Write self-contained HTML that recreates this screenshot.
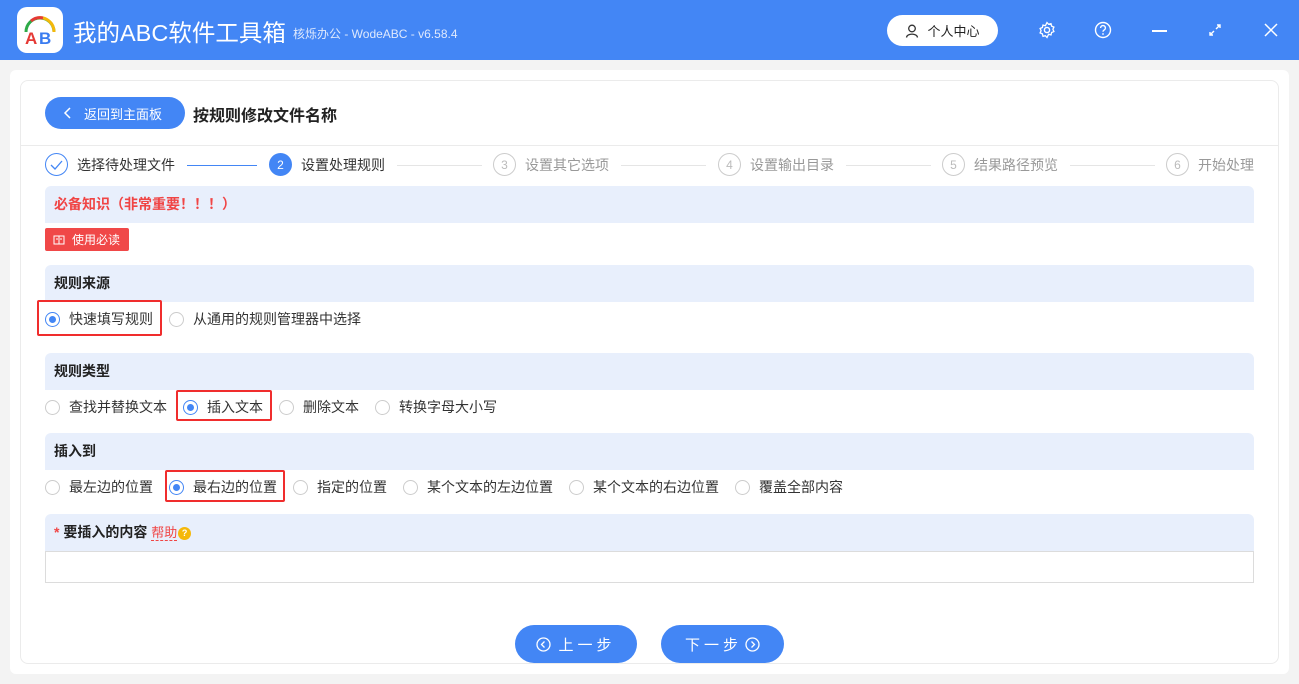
<!DOCTYPE html>
<html><head><meta charset="utf-8"><style>
*{box-sizing:border-box;margin:0;padding:0}
body{width:1299px;height:684px;background:#f3f3f3;font-family:"Liberation Sans","Noto Sans CJK SC",sans-serif;position:relative;overflow:hidden;color:#333}
.a{position:absolute}
.hdr{left:0;top:0;width:1299px;height:60px;background:#4386f5}
.bar{left:45px;width:1209px;height:37px;background:#e8effc;font-size:14px;font-weight:bold;color:#222;padding-left:9px;line-height:37px;border-radius:6px 6px 0 0}
.r{font-size:14px;color:#333;display:flex;align-items:center;line-height:16px}
.rd{width:15px;height:15px;border:1px solid #ccc;border-radius:50%;background:#fff;margin-right:9px;display:inline-block;position:relative;flex:none}
.rd.on{border-color:#4386f5}
.rd.on::after{content:"";position:absolute;left:3px;top:3px;width:7px;height:7px;border-radius:50%;background:#4386f5}
.box{border:2px solid #f02d2d;border-radius:2px}
.step{font-size:14px;color:#333;display:flex;align-items:center}
.sc{width:23px;height:23px;border-radius:50%;border:1px solid #ccc;color:#bbb;font-size:12px;display:inline-flex;align-items:center;justify-content:center;margin-right:9px}
.ln{height:1px;background:#e5e5e5}
.btn{height:38px;border-radius:19px;background:#4386f5;color:#fff;font-size:15px;display:flex;align-items:center;justify-content:center;letter-spacing:4px}
</style></head><body>
<div class="a hdr"></div>
<div class="a" style="left:17px;top:7px;width:46px;height:46px;background:#fff;border-radius:10px">
<svg width="46" height="46"><path d="M9 25 A14 14 0 0 1 37 25" stroke="#2eaa48" stroke-width="3" fill="none"/><path d="M20 11 A14 14 0 0 1 37 25" stroke="#f5b80a" stroke-width="3" fill="none"/><path d="M14 14 A14 14 0 0 1 26 11" stroke="#e53935" stroke-width="3" fill="none"/><text x="8" y="37" font-size="17" font-weight="bold" fill="#e53935" font-family="Liberation Sans">A</text><text x="22" y="37" font-size="17" font-weight="bold" fill="#3a7cf0" font-family="Liberation Sans">B</text></svg></div>
<div class="a" style="left:73px;top:14px;font-size:23.5px;color:#fff">我的ABC软件工具箱</div>
<div class="a" style="left:293px;top:25px;font-size:12px;color:#dfe9fd">核烁办公 - WodeABC - v6.58.4</div>
<div class="a" style="left:887px;top:15px;width:111px;height:31px;background:#fff;border-radius:16px;font-size:13px;color:#222;display:flex;align-items:center;justify-content:center">
<svg width="14" height="14" style="margin-right:8px"><circle cx="7" cy="4.5" r="3.3" stroke="#333" stroke-width="1.3" fill="none"/><path d="M1.5 13.5 C2 9 12 9 12.5 13.5" stroke="#333" stroke-width="1.3" fill="none"/></svg>个人中心</div>
<svg class="a" style="left:1038px;top:21px" width="18" height="18" viewBox="0 0 18 18"><circle cx="9" cy="9" r="2.6" stroke="#fff" stroke-width="1.4" fill="none"/><path d="M9 1.5l1.6 1.8 2.4-.6.6 2.4 2.3 1-1 2.2 1 2.2-2.3 1-.6 2.4-2.4-.6L9 16.5l-1.6-1.8-2.4.6-.6-2.4-2.3-1 1-2.2-1-2.2 2.3-1 .6-2.4 2.4.6z" stroke="#fff" stroke-width="1.3" fill="none"/></svg>
<svg class="a" style="left:1094px;top:21px" width="18" height="18"><circle cx="9" cy="9" r="7.5" stroke="#fff" stroke-width="1.4" fill="none"/><path d="M6.6 7a2.4 2.4 0 1 1 3.4 2.1c-.7.4-1 .8-1 1.6" stroke="#fff" stroke-width="1.4" fill="none"/><circle cx="9" cy="13" r=".9" fill="#fff"/></svg>
<div class="a" style="left:1152px;top:30px;width:15px;height:1.5px;background:#fff"></div>
<svg class="a" style="left:1208px;top:23px" width="14" height="14"><path d="M2 12L6 8M8 6l4-4M9 2h3v3M2 9v3h3" stroke="#fff" stroke-width="1.4" fill="none"/></svg>
<svg class="a" style="left:1264px;top:23px" width="14" height="14"><path d="M1 1L13 13M13 1L1 13" stroke="#fff" stroke-width="1.5"/></svg>

<div class="a" style="left:10px;top:70px;width:1279px;height:604px;background:#fff;border-radius:6px"></div>
<div class="a" style="left:20px;top:80px;width:1259px;height:584px;border:1px solid #ebebeb;border-radius:8px"></div>
<div class="a" style="left:45px;top:97px;width:140px;height:32px;background:#4386f5;border-radius:16px;color:#fff;font-size:13px;display:flex;align-items:center;padding-left:18px"><svg width="10" height="12" style="margin-right:11px"><path d="M7 1L2 6l5 5" stroke="#fff" stroke-width="1.5" fill="none"/></svg>返回到主面板</div>
<div class="a" style="left:193px;top:102px;font-size:16px;font-weight:bold;color:#222">按规则修改文件名称</div>
<div class="a" style="left:21px;top:145px;width:1257px;height:1px;background:#ebebeb"></div>

<div class="a step" style="left:45px;top:153px"><span class="sc" style="border-color:#4386f5"><svg width="13" height="10"><path d="M1 5l4 4 7-8" stroke="#4386f5" stroke-width="1.3" fill="none"/></svg></span>选择待处理文件</div>
<div class="a ln" style="left:187px;top:165px;width:70px;background:#4386f5"></div>
<div class="a step" style="left:269px;top:153px"><span class="sc" style="background:#4386f5;border-color:#4386f5;color:#fff">2</span>设置处理规则</div>
<div class="a ln" style="left:397px;top:165px;width:85px"></div>
<div class="a step" style="left:493px;top:153px;color:#999"><span class="sc">3</span>设置其它选项</div>
<div class="a ln" style="left:621px;top:165px;width:85px"></div>
<div class="a step" style="left:718px;top:153px;color:#999"><span class="sc">4</span>设置输出目录</div>
<div class="a ln" style="left:846px;top:165px;width:85px"></div>
<div class="a step" style="left:942px;top:153px;color:#999"><span class="sc">5</span>结果路径预览</div>
<div class="a ln" style="left:1070px;top:165px;width:85px"></div>
<div class="a step" style="left:1166px;top:153px;color:#999"><span class="sc">6</span>开始处理</div>

<div class="a bar" style="top:186px;color:#f04545">必备知识（非常重要！！！）</div>
<div class="a" style="left:45px;top:228px;width:84px;height:23px;background:#f04848;border-radius:2px;color:#fff;font-size:12px;display:flex;align-items:center;padding-left:8px"><svg width="12" height="10" style="margin-right:7px"><rect x="1" y="1" width="10" height="8" stroke="#fff" fill="none"/><path d="M6 1v8M3 4h2M7 4h2" stroke="#fff"/></svg>使用必读</div>

<div class="a bar" style="top:265px">规则来源</div>
<div class="a r" style="left:45px;top:311px"><span class="rd on"></span>快速填写规则</div>
<div class="a r" style="left:169px;top:311px"><span class="rd"></span>从通用的规则管理器中选择</div>
<div class="a box" style="left:37px;top:300px;width:125px;height:36px"></div>

<div class="a bar" style="top:353px">规则类型</div>
<div class="a r" style="left:45px;top:399px"><span class="rd"></span>查找并替换文本</div>
<div class="a r" style="left:183px;top:399px"><span class="rd on"></span>插入文本</div>
<div class="a r" style="left:279px;top:399px"><span class="rd"></span>删除文本</div>
<div class="a r" style="left:375px;top:399px"><span class="rd"></span>转换字母大小写</div>
<div class="a box" style="left:176px;top:390px;width:96px;height:31px"></div>

<div class="a bar" style="top:433px">插入到</div>
<div class="a r" style="left:45px;top:479px"><span class="rd"></span>最左边的位置</div>
<div class="a r" style="left:169px;top:479px"><span class="rd on"></span>最右边的位置</div>
<div class="a r" style="left:293px;top:479px"><span class="rd"></span>指定的位置</div>
<div class="a r" style="left:403px;top:479px"><span class="rd"></span>某个文本的左边位置</div>
<div class="a r" style="left:569px;top:479px"><span class="rd"></span>某个文本的右边位置</div>
<div class="a r" style="left:735px;top:479px"><span class="rd"></span>覆盖全部内容</div>
<div class="a box" style="left:165px;top:470px;width:120px;height:32px"></div>

<div class="a bar" style="top:514px"><span style="color:#f04545">*</span> 要插入的内容 <span style="color:#f04545;font-weight:normal;font-size:13px;border-bottom:1px dashed #f04545;line-height:15px;display:inline-block">帮助</span> <span style="display:inline-block;width:13px;height:13px;border-radius:50%;background:#f5b80a;color:#fff;font-size:9px;line-height:13px;text-align:center;vertical-align:middle;margin-left:-3px">?</span></div>
<div class="a" style="left:45px;top:551px;width:1209px;height:32px;border:1px solid #dcdcdc"></div>

<div class="a btn" style="left:515px;top:625px;width:122px"><svg width="15" height="15" style="margin-right:7px"><circle cx="7.5" cy="7.5" r="6.5" stroke="#fff" stroke-width="1.3" fill="none"/><path d="M8.5 4.5L5.5 7.5l3 3" stroke="#fff" stroke-width="1.3" fill="none"/></svg>上一步</div>
<div class="a btn" style="left:661px;top:625px;width:123px">下一步<svg width="15" height="15" style="margin-left:3px"><circle cx="7.5" cy="7.5" r="6.5" stroke="#fff" stroke-width="1.3" fill="none"/><path d="M6.5 4.5l3 3-3 3" stroke="#fff" stroke-width="1.3" fill="none"/></svg></div>
</body></html>
